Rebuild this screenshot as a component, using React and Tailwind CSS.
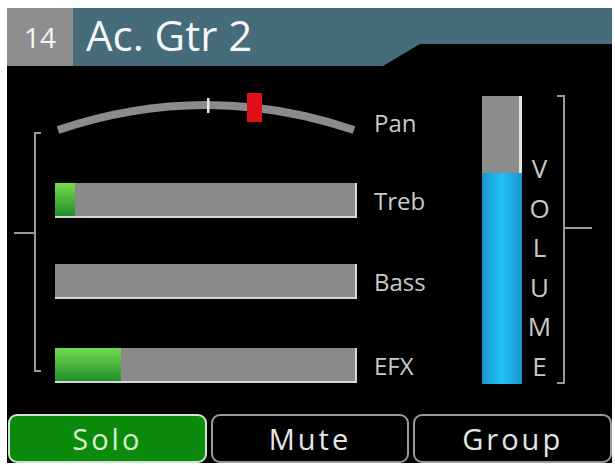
import React from "react";

const bars = [
  { name: "Treb", fill: 20, mt: "mt-[47px]" },
  { name: "Bass", fill: 0, mt: "mt-[46px]" },
  { name: "EFX", fill: 66, mt: "mt-[49px]" },
];

const buttons = [
  { name: "Solo", on: true },
  { name: "Mute", on: false },
  { name: "Group", on: false },
];

const letters = ["V", "O", "L", "U", "M", "E"];

// curved pan track with centre tick and red position marker
const PanArc = () => (
  <svg width="302" height="46" viewBox="0 0 302 46" className="overflow-visible">
    <path d="M3 40 Q151 -10 299 40" fill="none" stroke="#8b8b8b" strokeWidth="8" />
    <rect x="152" y="8" width="2.5" height="15" fill="#e6e6e6" />
    <rect x="192" y="3" width="15" height="29" fill="#e0101a" />
  </svg>
);

const Bar = ({ fill }) => (
  <div className="relative h-[35px] w-[302px] bg-[#8a8a8a] border-r-2 border-b-2 border-[#d6d6d6]">
    {fill > 0 && (
      <div
        className="h-full bg-gradient-to-b from-[#74dc4c] to-[#1e8e2c]"
        style={{ width: fill }}
      />
    )}
  </div>
);

const Label = ({ children, className = "" }) => (
  <span className={`pl-[17px] text-[24px] leading-none text-[#cacaca] ${className}`}>{children}</span>
);

export default function App() {
  return (
    <div
      className="w-[615px] h-[465px] bg-white pt-[8px] pl-[7px] pr-[3px] pb-[2px]"
      style={{ fontFamily: '"Open Sans", "Liberation Sans", sans-serif' }}
    >
      <div className="h-full bg-black flex flex-col">
        {/* header */}
        <div className="h-[58px] flex shrink-0">
          <div className="w-[66px] bg-[#8e8e8e] flex items-center justify-center text-[28px] text-[#f5f5f5]">
            14
          </div>
          <div className="flex-1 bg-[#466b7b] flex items-center pl-[13px] [clip-path:polygon(0_0,100%_0,100%_36px,347px_36px,310px_100%,0_100%)]">
            <span className="text-[42px] leading-none text-[#f4f8f8] -mt-[4px]">Ac. Gtr 2</span>
          </div>
        </div>

        {/* channel strip */}
        <div className="h-[348px] flex">
          {/* left bracket */}
          <div className="w-[48px] pl-[7px] pt-[66px] flex flex-col">
            <div className="ml-[20px] h-[100px] w-[7px] border-l-2 border-t-2 border-[#9a9a9a]" />
            <div className="w-[22px] h-[2px] bg-[#9a9a9a]" />
            <div className="ml-[20px] h-[138px] w-[7px] border-l-2 border-b-2 border-[#9a9a9a]" />
          </div>

          {/* pan + eq/efx rows */}
          <div className="w-[427px] flex flex-col pt-[24px]">
            <div className="flex items-center h-[46px]">
              <PanArc />
              <Label className="mt-[20px]">Pan</Label>
            </div>
            {bars.map((b) => (
              <div key={b.name} className={`flex items-center ${b.mt}`}>
                <Bar fill={b.fill} />
                <Label>{b.name}</Label>
              </div>
            ))}
          </div>

          {/* volume fader */}
          <div className="w-[40px] h-[288px] mt-[30px] flex flex-col">
            <div className="h-[77px] bg-[#8c8c8c] border-r-[3px] border-[#e2e2e2]" />
            <div className="flex-1 bg-gradient-to-r from-[#1b95d2] via-[#22c2f6] to-[#1b95d2]" />
          </div>

          <div className="w-[35px] flex flex-col items-center pt-[83px]">
            {letters.map((l) => (
              <span key={l} className="text-[26px] leading-[39.5px] text-[#c8c8c8]">
                {l}
              </span>
            ))}
          </div>

          {/* right bracket */}
          <div className="pt-[29px] flex flex-col">
            <div className="h-[132px] w-[8px] border-r-2 border-t-2 border-[#9a9a9a]" />
            <div className="ml-[6px] w-[29px] h-[2px] bg-[#9a9a9a]" />
            <div className="h-[155px] w-[8px] border-r-2 border-b-2 border-[#9a9a9a]" />
          </div>
        </div>

        {/* bottom buttons */}
        <div className="h-[49px] flex gap-[4px] pl-[1px]">
          {buttons.map((b) => (
            <div
              key={b.name}
              className={`flex-1 rounded-[9px] border-2 flex items-center justify-center text-[29px] font-medium tracking-[3px] ${
                b.on
                  ? "bg-[#0b8a0b] border-[#cfe5cf] text-[#d8f2d0]"
                  : "bg-black border-[#9a9a9a] text-[#e6e6e6]"
              }`}
            >
              {b.name}
            </div>
          ))}
        </div>
      </div>
    </div>
  );
}
